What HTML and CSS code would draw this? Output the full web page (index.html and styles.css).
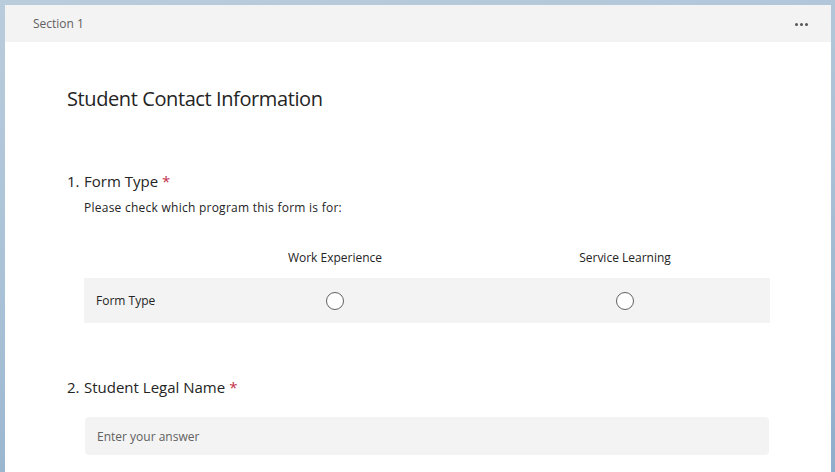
FILE: index.html
```html
<!DOCTYPE html>
<html lang="en">
<head>
<meta charset="utf-8">
<title>Student Contact Information</title>
<link rel="stylesheet" href="styles.css">
</head>
<body>
<div class="page">
  <div class="card">
    <div class="section-bar">
      <span class="section-name">Section 1</span>
      <span class="more" aria-label="More options"><i></i><i></i><i></i></span>
    </div>
    <div class="card-body">
      <h1 class="section-title">Student Contact Information</h1>

      <div class="question q1">
        <div class="q-title"><span class="q-num">1.</span><span class="q-text">Form Type</span><span class="req">*</span></div>
        <div class="q-content">
          <div class="q-desc">Please check which program this form is for:</div>
          <div class="likert">
            <div class="likert-head">
              <div class="lk-label"></div>
              <div class="lk-col">Work Experience</div>
              <div class="lk-col">Service Learning</div>
            </div>
            <div class="likert-row">
              <div class="lk-label">Form Type</div>
              <div class="lk-col"><span class="radio"></span></div>
              <div class="lk-col"><span class="radio"></span></div>
            </div>
          </div>
        </div>
      </div>

      <div class="question q2">
        <div class="q-title"><span class="q-num">2.</span><span class="q-text">Student Legal Name</span><span class="req">*</span></div>
        <div class="q-content">
          <div class="answer">Enter your answer</div>
        </div>
      </div>
    </div>
  </div>
</div>
</body>
</html>
```
FILE: styles.css
```css
html, body {
  margin: 0;
  padding: 0;
  height: 100%;
}
body {
  background: linear-gradient(170deg, #b9ccdc 0%, #a9c1d6 50%, #8eaecb 100%);
  font-family: "Open Sans", "Noto Sans", sans-serif;
  color: #242424;
  overflow: hidden;
}
.page {
  padding: 5px 4px 0 5px;
}
.card {
  background: #ffffff;
  min-height: 480px;
}
.section-bar {
  height: 37px;
  background: #f3f3f3;
  display: flex;
  align-items: center;
  justify-content: space-between;
  padding: 0 23px 0 28px;
}
.section-name {
  font-size: 12px;
  color: #616161;
}
.more {
  display: flex;
  gap: 2px;
  padding-top: 1px;
}
.more i {
  width: 3px;
  height: 3px;
  background: #555;
  border-radius: 50%;
  display: block;
}
.card-body {
  padding: 43px 61px 0 62px;
}
.section-title {
  margin: 0;
  font-size: 20px;
  font-weight: 400;
  line-height: 28px;
  letter-spacing: -0.4px;
  color: #242424;
}
.question.q1 {
  margin-top: 57px;
}
.question.q2 {
  margin-top: 53px;
}
.q-title {
  font-size: 15px;
  line-height: 22px;
  display: flex;
  color: #242424;
}
.q-num {
  width: 17px;
}
.req {
  color: #c4314b;
  margin-left: 4px;
}
.q-content {
  margin-left: 17px;
}
.q-desc {
  font-size: 12px;
  line-height: 18px;
  letter-spacing: 0.25px;
  margin-top: 7px;
  color: #242424;
}
.likert {
  margin-top: 32px;
}
.likert-head, .likert-row {
  display: grid;
  grid-template-columns: 106px 1fr 1fr;
  align-items: center;
}
.likert-head {
  font-size: 12px;
  line-height: 18px;
  color: #242424;
  margin-bottom: 11px;
}
.likert-row {
  background: #f3f3f3;
  height: 45px;
  font-size: 12px;
}
.likert-row .lk-label {
  padding-left: 12px;
}
.lk-col {
  text-align: center;
}
.likert-row .lk-col {
  display: flex;
  justify-content: center;
  align-items: center;
}
.radio {
  width: 18px;
  height: 18px;
  box-sizing: border-box;
  border: 1px solid #616161;
  border-radius: 50%;
  background: #fff;
  display: block;
}
.answer {
  margin: 19px 1px 0 1px;
  height: 38px;
  background: #f3f3f3;
  border-radius: 4px;
  display: flex;
  align-items: center;
  padding-left: 12px;
  font-size: 12px;
  color: #616161;
}
```
